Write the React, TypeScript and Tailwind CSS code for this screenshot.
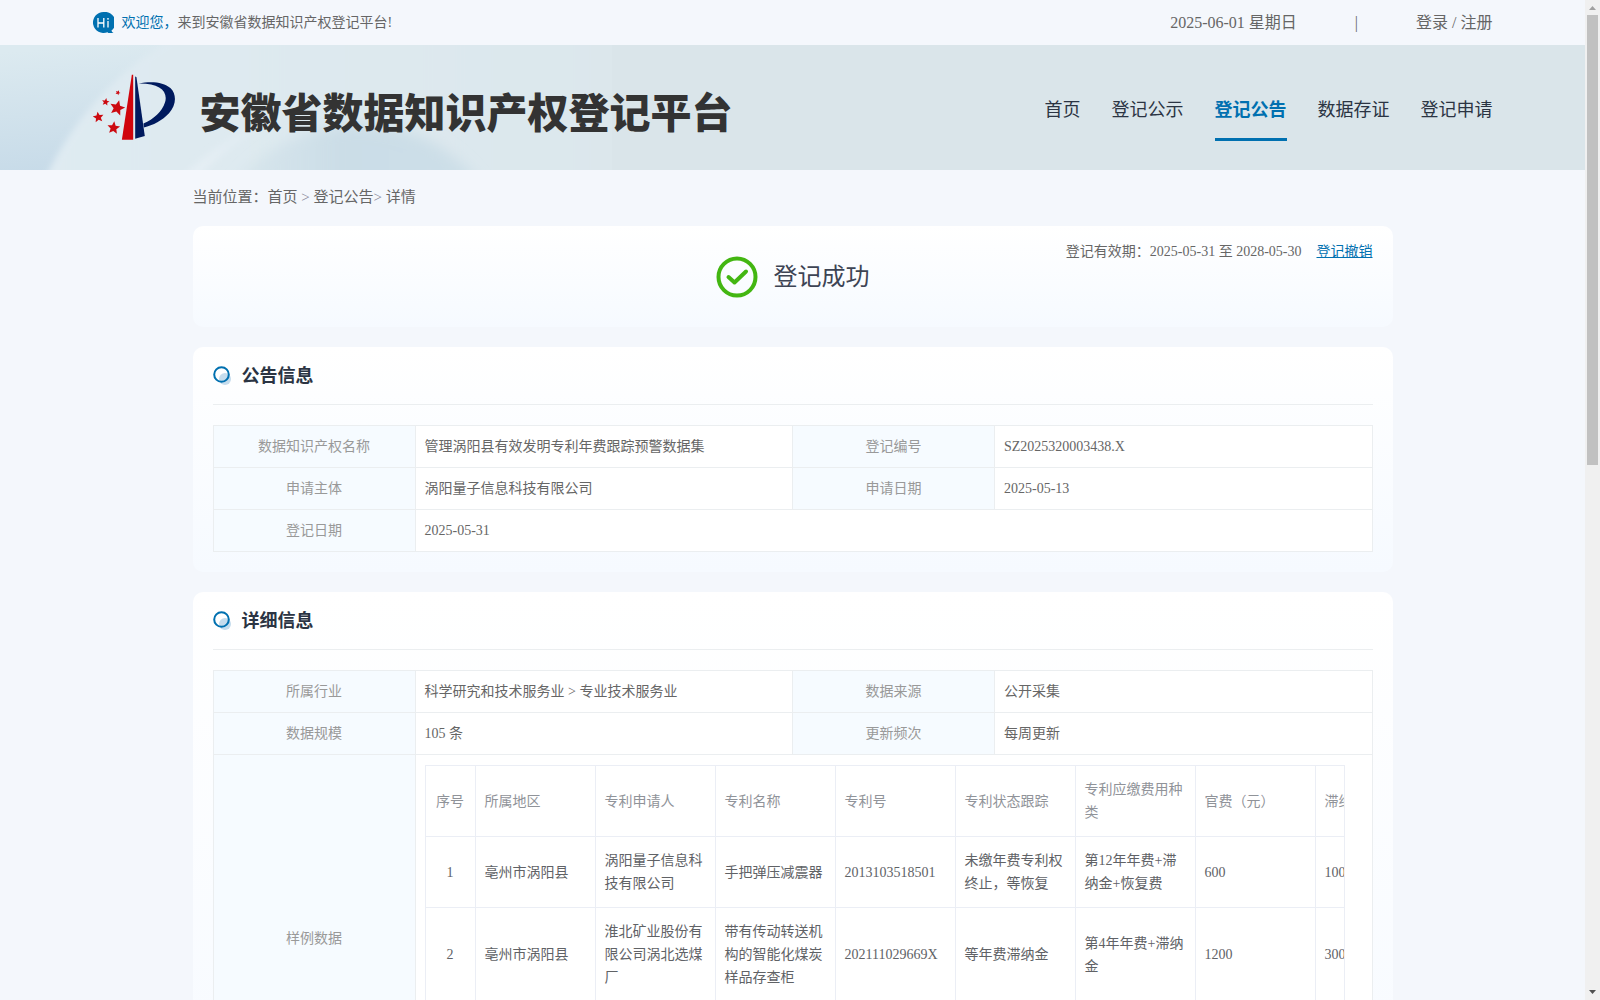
import type { ReactNode } from 'react';

interface InfoField {
  label: string;
  value: ReactNode;
}

const NAV_ITEMS = ['首页', '登记公示', '登记公告', '数据存证', '登记申请'];
const ACTIVE_ITEM = '登记公告';

const NOTICE_ROWS: InfoField[][] = [
  [
    { label: '数据知识产权名称', value: '管理涡阳县有效发明专利年费跟踪预警数据集' },
    { label: '登记编号', value: 'SZ2025320003438.X' },
  ],
  [
    { label: '申请主体', value: '涡阳量子信息科技有限公司' },
    { label: '申请日期', value: '2025-05-13' },
  ],
  [{ label: '登记日期', value: '2025-05-31' }],
];

const SAMPLE_COLUMNS = [
  '序号',
  '所属地区',
  '专利申请人',
  '专利名称',
  '专利号',
  '专利状态跟踪',
  '专利应缴费用种类',
  '官费（元）',
  '滞纳金',
];

const SAMPLE_ROWS = [
  ['1', '亳州市涡阳县', '涡阳量子信息科技有限公司', '手把弹压减震器', '2013103518501', '未缴年费专利权终止，等恢复', '第12年年费+滞纳金+恢复费', '600', '1000'],
  ['2', '亳州市涡阳县', '淮北矿业股份有限公司涡北选煤厂', '带有传动转送机构的智能化煤炭样品存查柜', '202111029669X', '等年费滞纳金', '第4年年费+滞纳金', '1200', '300'],
];

function HiIcon() {
  return (
    <svg width="21" height="21" viewBox="0 0 21 21" aria-hidden="true">
      <path d="M10.5 0a10.5 10.5 0 1 0 4 20.2l.8.8h5.2c-1-.6-1.8-1.3-2-2.4A10.5 10.5 0 0 0 10.5 0z" fill="#0070b0" />
      <path d="M5 6v9.500M10.800 6v9.500M5 11h6M15 9v6.500" stroke="#fff" strokeWidth="1.300" fill="none" />
      <circle cx="15" cy="6.800" r="0.900" fill="#fff" />
    </svg>
  );
}

function Star({ x, y, r, rotate }: { x: number; y: number; r: number; rotate: number }) {
  return (
    <path
      d="M0-1 .27-.37 .95-.31 .43.14 .59.81 0 .46-.59.81-.43.14-.95-.31-.27-.37z"
      transform={`translate(${x} ${y}) rotate(${rotate}) scale(${r})`}
      fill="#cc0a10"
    />
  );
}

function Logo() {
  return (
    <svg width="83" height="67" viewBox="38 42 250 201" className="shrink-0" aria-hidden="true">
      <path d="M155 44h4v196h-34z" fill="#d0050c" />
      <path d="M165 48l4 4 25 176-29 9z" fill="#001a5e" />
      <path d="M175 70c40-8 76-4 96 14 20 19 18 51-4 76-20 22-48 36-76 43l-1-12c31-13 56-36 65-64 10-34-17-58-80-57z" fill="#001a5e" />
      <Star x={111} y={144} r={24} rotate={14} />
      <Star x={100} y={204} r={20} rotate={6} />
      <Star x={54} y={172} r={17} rotate={-8} />
      <Star x={76} y={126} r={12} rotate={10} />
      <Star x={113} y={98} r={8} rotate={25} />
    </svg>
  );
}

function BannerArt() {
  return (
    <svg
      className="absolute inset-0 h-full w-full"
      viewBox="0 0 1585 125"
      preserveAspectRatio="xMinYMin slice"
      aria-hidden="true"
    >
      <defs>
        <linearGradient id="corner" x1="0.3" y1="0" x2="0.5" y2="1">
          <stop offset="0" stopColor="#dceaf0" />
          <stop offset="1" stopColor="#c6dae8" />
        </linearGradient>
        <linearGradient id="arc" x1="0" y1="0" x2="1" y2="0">
          <stop offset="0" stopColor="#dfebf2" />
          <stop offset="1" stopColor="#dce7ec" />
        </linearGradient>
        <linearGradient id="glow" x1="0" y1="0" x2="1" y2="0">
          <stop offset="0" stopColor="#cddfe8" stopOpacity="0.300" />
          <stop offset="0.450" stopColor="#cbdde7" />
          <stop offset="1" stopColor="#cddfe8" />
        </linearGradient>
        <linearGradient id="rim" x1="0" y1="1" x2="1" y2="0">
          <stop offset="0" stopColor="#e6eff5" />
          <stop offset="1" stopColor="#e6eff5" stopOpacity="0" />
        </linearGradient>
        <filter id="soft" x="-10%" y="-20%" width="120%" height="140%">
          <feGaussianBlur stdDeviation="3" />
        </filter>
        <filter id="softer" x="-20%" y="-40%" width="140%" height="180%">
          <feGaussianBlur stdDeviation="7" />
        </filter>
      </defs>
      <rect width="1585" height="125" fill="#dae5ea" />
      <rect width="300" height="125" fill="url(#corner)" />
      <path d="M40 145C64 88 108 28 185-15H625V145z" fill="url(#arc)" filter="url(#soft)" />
      <rect x="612" width="973" height="125" fill="#dae5ea" />
      <path d="M225 150C255 108 300 84 350 80c60-2 105 20 138 70z" fill="url(#glow)" filter="url(#softer)" />
      <path d="M184 130C212 104 240 84 280 66l4 5c-34 16-62 36-86 62z" fill="url(#rim)" filter="url(#soft)" />
    </svg>
  );
}

function SectionCard({ title, children }: { title: string; children: ReactNode }) {
  return (
    <section className="mt-5 rounded-[10px] bg-linear-to-b from-white to-[#f6faff] px-5 pb-5">
      <div className="mb-5 flex h-[58px] items-center gap-2.5 border-b border-[#ebeef0]">
        <svg width="19" height="19" viewBox="0 0 19 19" aria-hidden="true">
          <circle cx="12" cy="13" r="6" fill="#c5dced" />
          <circle cx="8.5" cy="8.5" r="7.3" fill="none" stroke="#0070b0" strokeWidth="2" />
        </svg>
        <h2 className="text-lg font-bold text-[#2b3443]">{title}</h2>
      </div>
      {children}
    </section>
  );
}

function InfoTable({ rows }: { rows: InfoField[][] }) {
  return (
    <table className="w-full table-fixed border-collapse text-sm leading-[21px]">
      <colgroup>
        <col className="w-[202px]" />
        <col />
        <col className="w-[202px]" />
        <col />
      </colgroup>
      <tbody>
        {rows.map((fields) => (
          <tr key={fields[0].label}>
            {fields.map((field) => (
              <InfoCells key={field.label} field={field} wide={fields.length === 1} />
            ))}
          </tr>
        ))}
      </tbody>
    </table>
  );
}

function InfoCells({ field, wide }: { field: InfoField; wide: boolean }) {
  return (
    <>
      <th scope="row" className="border border-[#ebeef0] bg-[#f6fbff] px-2.5 py-2.5 text-center font-normal text-[#999]">
        {field.label}
      </th>
      <td colSpan={wide ? 3 : 1} className="border border-[#ebeef0] bg-white px-[9px] py-2.5 text-[#666]">
        {field.value}
      </td>
    </>
  );
}

function SampleTable() {
  return (
    <div className="min-h-[346px] max-w-[920px] overflow-hidden">
      <div className="overflow-hidden border-x border-t border-[#ebeef5]">
        <table className="w-[1010px] table-fixed border-separate border-spacing-0 text-sm leading-[23px]">
          <colgroup>
            {SAMPLE_COLUMNS.map((column, i) => (
              <col key={column} className={i === 0 ? 'w-[50px]' : 'w-[120px]'} />
            ))}
          </colgroup>
          <thead>
            <tr>
              {SAMPLE_COLUMNS.map((column, i) => (
                <th
                  key={column}
                  className={`border-r border-b border-[#ebeef5] py-3 font-normal text-[#909399] ${
                    i === 0 ? 'text-center' : 'px-[9px] text-left'
                  }`}
                >
                  {column}
                </th>
              ))}
            </tr>
          </thead>
          <tbody>
            {SAMPLE_ROWS.map((row) => (
              <tr key={row[0]}>
                {row.map((cell, i) => (
                  <td
                    key={SAMPLE_COLUMNS[i]}
                    className={`border-r border-b border-[#ebeef5] py-3 text-[#606266] ${
                      i === 0 ? 'text-center' : 'px-[9px]'
                    }`}
                  >
                    {cell}
                  </td>
                ))}
              </tr>
            ))}
          </tbody>
        </table>
      </div>
    </div>
  );
}

const DETAIL_ROWS: InfoField[][] = [
  [
    { label: '所属行业', value: '科学研究和技术服务业 > 专业技术服务业' },
    { label: '数据来源', value: '公开采集' },
  ],
  [
    { label: '数据规模', value: '105 条' },
    { label: '更新频次', value: '每周更新' },
  ],
  [{ label: '样例数据', value: <SampleTable /> }],
];

function ScrollTrack() {
  return (
    <div className="flex w-[15px] shrink-0 flex-col items-center bg-[#f0f0f0]" aria-hidden="true">
      <svg width="15" height="15" viewBox="0 0 15 15" className="shrink-0">
        <path d="M4 10h7L7.5 6z" fill="#a0a0a0" />
      </svg>
      <div className="h-[45%] w-[11px] bg-[#c1c1c1]" />
      <svg width="15" height="15" viewBox="0 0 15 15" className="mt-auto shrink-0">
        <path d="M4 5h7L7.5 9z" fill="#505050" />
      </svg>
    </div>
  );
}

export default function App() {
  return (
    <div className="flex h-screen overflow-hidden bg-[#f4f7fc] font-['Liberation_Serif','Noto_Sans_CJK_SC',serif] text-[#666]">
      <div className="min-w-0 flex-1 overflow-hidden">
        <div className="mx-auto flex h-[45px] max-w-[1400px] items-center justify-between">
          <div className="flex items-center gap-2 text-sm">
            <HiIcon />
            <p>
              <span className="text-[#0070b0]">欢迎您，</span>来到安徽省数据知识产权登记平台!
            </p>
          </div>
          <div className="flex items-center gap-[58px] text-base">
            <span>2025-06-01 星期日</span>
            <span>|</span>
            <span>
              <a href="#login">登录</a> / <a href="#register">注册</a>
            </span>
          </div>
        </div>

        <header className="relative h-[125px] overflow-hidden">
          <BannerArt />
          <div className="relative mx-auto flex h-full max-w-[1400px] items-center">
            <Logo />
            <h1 className="ml-6 pt-1 font-['Noto_Sans_CJK_SC',sans-serif] text-[41px] leading-[48px] font-black whitespace-nowrap text-[#333]">
              安徽省数据知识产权登记平台
            </h1>
            <nav className="ml-auto flex gap-[31px] text-lg leading-[27px]">
              {NAV_ITEMS.map((item) => (
                <a
                  key={item}
                  href="#nav"
                  className={`border-b-3 pt-[23px] pb-3.5 ${
                    item === ACTIVE_ITEM
                      ? 'border-[#0070b0] font-bold text-[#0070b0]'
                      : 'border-transparent text-[#2b3443]'
                  }`}
                >
                  {item}
                </a>
              ))}
            </nav>
          </div>
        </header>

        <main className="mx-auto max-w-[1200px]">
          <div className="flex h-[55px] items-center text-[15px] whitespace-pre">
            当前位置：<a href="#home">首页</a>
            <span className="text-[#889]"> &gt; </span>
            <a href="#notice">登记公告</a>
            <span className="text-[#889]">&gt; </span>
            <span>详情</span>
          </div>

          <section className="relative mt-px flex h-[101px] items-center justify-center gap-4 rounded-[10px] bg-linear-to-b from-white to-[#f6faff]">
            <svg width="42" height="42" viewBox="0 0 42 42" fill="none" stroke="#43b612" strokeWidth="4" aria-hidden="true">
              <circle cx="21" cy="21" r="18.5" />
              <path d="M12.500 21l6 5.500L30 15.500" strokeLinecap="round" strokeLinejoin="round" />
            </svg>
            <p className="text-2xl text-[#3d4454]">登记成功</p>
            <div className="absolute top-4 right-5 flex gap-[15px] text-sm">
              <span>登记有效期：2025-05-31 至 2028-05-30</span>
              <a href="#revoke" className="text-[#0070b0] underline">
                登记撤销
              </a>
            </div>
          </section>

          <SectionCard title="公告信息">
            <InfoTable rows={NOTICE_ROWS} />
          </SectionCard>

          <SectionCard title="详细信息">
            <InfoTable rows={DETAIL_ROWS} />
          </SectionCard>
        </main>
      </div>
      <ScrollTrack />
    </div>
  );
}
